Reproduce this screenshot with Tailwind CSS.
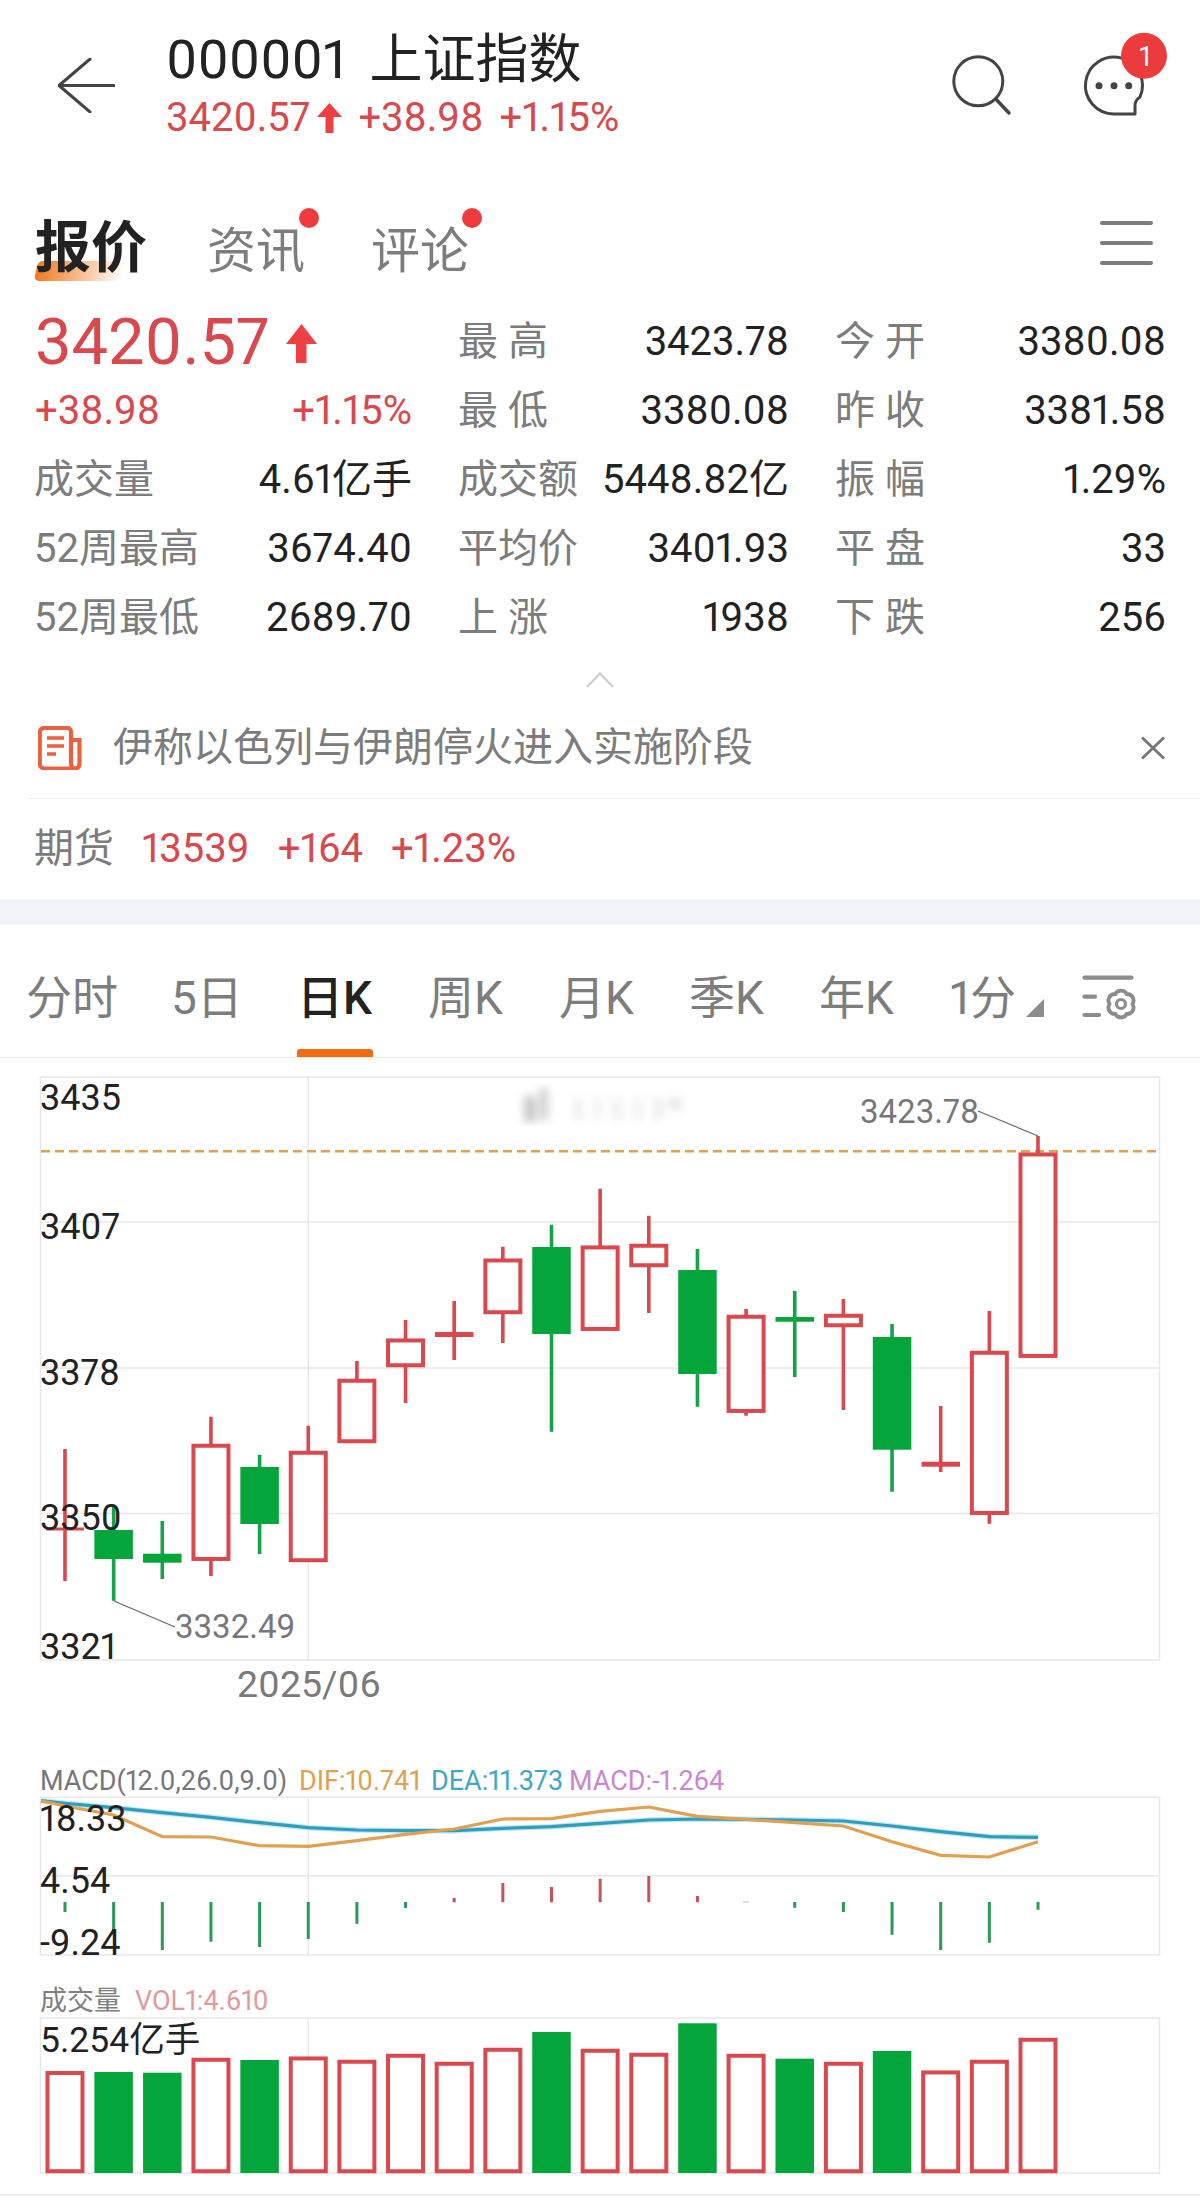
<!DOCTYPE html>
<html lang="zh">
<head>
<meta charset="utf-8">
<script src="https://cdn.jsdelivr.net/npm/@tailwindcss/browser@4"></script>
</head>
<body class="bg-white">
<div class="w-[1200px] h-[2211px] overflow-hidden bg-white text-[#222] proportional-nums font-['Roboto','Noto_Sans_CJK_SC',sans-serif]">

  <!-- header -->
  <header class="flex h-[170px] items-start pl-[58px]">
    <svg class="mt-[58px] w-[57px] h-[55px] shrink-0" viewBox="58 58 57 55" fill="none" stroke="#444" stroke-width="3" stroke-linecap="round" stroke-linejoin="round"><path d="M90 59 L59 85.5 L90 112 M60 85.5 H114"/></svg>
    <div class="ml-[51px] mt-[34px]">
      <div class="flex text-[54px] leading-[52px] text-[#222]"><span>000001</span><span class="ml-[23px] text-[53px]">上证指数</span></div>
      <div class="mt-[12px] flex items-center text-[40px] leading-[40px] text-[#d9484d]">
        <span>3420.57</span>
        <svg class="ml-[7px] w-[25px] h-[30px]" viewBox="0 0 25 30"><path fill="#ef3f42" d="M12.5 0 L25 14 H16.5 V30 H8.5 V14 H0 Z"/></svg>
        <span class="ml-[16px]">+38.98</span>
        <span class="ml-[16px]">+1.15%</span>
      </div>
    </div>
    <svg class="ml-auto mr-[30px] mt-[28px] w-[230px] h-[95px]" viewBox="940 28 230 95" fill="none">
      <circle cx="978.3" cy="81.3" r="24.5" stroke="#444" stroke-width="3"/>
      <path d="M996.7 100 L1009 113" stroke="#444" stroke-width="3.4" stroke-linecap="round"/>
      <path d="M1135 114 H1114 A28.5 28.5 0 1 1 1140 97 Q1135 100 1135 106 Z" stroke="#444" stroke-width="3" stroke-linejoin="round"/>
      <circle cx="1099" cy="85.7" r="3.5" fill="#444"/><circle cx="1114" cy="85.7" r="3.5" fill="#444"/><circle cx="1128.7" cy="85.7" r="3.5" fill="#444"/>
      <circle cx="1144" cy="55.7" r="23" fill="#ec3b3d"/>
      <text x="1145" y="65.5" text-anchor="middle" font-size="27" fill="#fff">1</text>
    </svg>
  </header>

  <!-- quote tabs -->
  <nav class="relative flex h-[137.5px] items-start pl-[35px]">
    <div class="absolute left-[36px] top-[91px] h-[20px] w-[88px] -skew-x-12 rounded-[5px] bg-linear-to-r from-[#f0791f] to-transparent"></div>
    <span class="relative mt-[48px] text-[56px] leading-[60px] font-bold text-[#222]">报价</span>
    <span class="relative ml-[60px] mt-[52px] text-[49px] leading-[60px] text-[#7d7d7d]">资讯<i class="absolute left-[92px] top-[-14px] h-[20px] w-[20px] rounded-full bg-[#ef3b3d]"></i></span>
    <span class="relative ml-[66px] mt-[52px] text-[49px] leading-[60px] text-[#7d7d7d]">评论<i class="absolute left-[91px] top-[-14px] h-[20px] w-[20px] rounded-full bg-[#ef3b3d]"></i></span>
    <div class="ml-auto mr-[47px] mt-[51px] flex w-[53px] flex-col gap-[16.5px]">
      <i class="block h-[3.5px] rounded-full bg-[#7d7d7d]"></i><i class="block h-[3.5px] rounded-full bg-[#7d7d7d]"></i><i class="block h-[3.5px] rounded-full bg-[#7d7d7d]"></i>
    </div>
  </nav>

  <!-- quote grid -->
  <section class="grid h-[345px] grid-cols-[378px_331px_331px] auto-rows-[69px] items-center gap-x-[46px] pl-[34px] text-[40px] leading-[50px]">
    <div class="flex items-center pl-[1px]"><span class="text-[65px] leading-[69px] text-[#d9484d]">3420.57</span><svg class="ml-[16px] mt-[2px] w-[31px] h-[39px]" viewBox="0 0 31 39"><path fill="#ef3f42" d="M15.5 0 L31 20 H20.5 V39 H10 V20 H0 Z"/></svg></div>
    <div class="flex justify-between"><span class="text-[#7c7c7c]">最 高</span><span>3423.78</span></div>
    <div class="flex justify-between"><span class="text-[#7c7c7c]">今 开</span><span>3380.08</span></div>

    <div class="flex justify-between pl-[1px] text-[#d9484d]"><span>+38.98</span><span>+1.15%</span></div>
    <div class="flex justify-between"><span class="text-[#7c7c7c]">最 低</span><span>3380.08</span></div>
    <div class="flex justify-between"><span class="text-[#7c7c7c]">昨 收</span><span>3381.58</span></div>

    <div class="flex justify-between"><span class="text-[#7c7c7c]">成交量</span><span>4.61亿手</span></div>
    <div class="flex justify-between"><span class="text-[#7c7c7c]">成交额</span><span>5448.82亿</span></div>
    <div class="flex justify-between"><span class="text-[#7c7c7c]">振 幅</span><span>1.29%</span></div>

    <div class="flex justify-between"><span class="text-[#7c7c7c]">52周最高</span><span>3674.40</span></div>
    <div class="flex justify-between"><span class="text-[#7c7c7c]">平均价</span><span>3401.93</span></div>
    <div class="flex justify-between"><span class="text-[#7c7c7c]">平 盘</span><span>33</span></div>

    <div class="flex justify-between"><span class="text-[#7c7c7c]">52周最低</span><span>2689.70</span></div>
    <div class="flex justify-between"><span class="text-[#7c7c7c]">上 涨</span><span>1938</span></div>
    <div class="flex justify-between"><span class="text-[#7c7c7c]">下 跌</span><span>256</span></div>
  </section>

  <!-- collapse caret -->
  <div class="flex h-[65.5px] justify-center pt-[19px]">
    <svg class="w-[28px] h-[16px]" viewBox="0 0 28 16" fill="none"><path d="M1 15 L14 1.5 L27 15" stroke="#cfcfcf" stroke-width="2.4"/></svg>
  </div>

  <!-- news -->
  <div class="ml-[27px] flex h-[81px] items-center border-b border-[#eeeeee] pl-[11px] pr-[34px] pb-[20px]">
    <svg class="w-[44px] h-[44px] shrink-0" viewBox="0 0 44 44" fill="none" stroke="#e8623f"><path d="M33 14 H41.5 V38 A4.5 4.5 0 0 1 37 42.5 H6 A4.5 4.5 0 0 1 1.8 38 V6 A4.5 4.5 0 0 1 6 1.8 H29 A4 4 0 0 1 33 6 V38 A4.5 4.5 0 0 0 37 42.5" stroke-width="4.2"/><path d="M9 12 H26 M9 20 H26 M9 28 H18" stroke-width="3.4"/></svg>
    <span class="ml-[31px] text-[40px] leading-[50px] text-[#7c7c7c]">伊称以色列与伊朗停火进入实施阶段</span>
    <svg class="ml-auto w-[26px] h-[24px]" viewBox="0 0 26 24" fill="none"><path d="M2 1.5 L24 22.5 M24 1.5 L2 22.5" stroke="#777" stroke-width="2.8"/></svg>
  </div>

  <!-- futures -->
  <div class="flex h-[99.5px] items-start pl-[34px] pt-[25px] text-[40px] leading-[50px] text-[#d9484d]">
    <span class="text-[#7c7c7c]">期货</span>
    <span class="ml-[28px]">13539</span>
    <span class="ml-[28px]">+164</span>
    <span class="ml-[28px]">+1.23%</span>
  </div>
  <div class="h-[26.5px] bg-[#f2f3f5]"></div>

  <!-- period tabs -->
  <nav class="relative flex h-[133px] items-start border-b border-[#e8e8e8] pl-[26px] pt-[43px] text-[46px] leading-[60px] text-[#7d7d7d]">
    <span class="w-[145px]">分时</span>
    <span class="w-[126px]">5日</span>
    <span class="w-[131px] font-medium text-[#222]">日K</span>
    <span class="w-[131px]">周K</span>
    <span class="w-[130px]">月K</span>
    <span class="w-[130px]">季K</span>
    <span class="w-[131px]">年K</span>
    <span class="w-[76px]">1分</span>
    <svg class="mt-[31px] w-[18px] h-[18px]" viewBox="0 0 18 18"><path fill="#8c8c8c" d="M0 18 L18 0 V18 Z"/></svg>
    <svg class="ml-[32px] mt-[6px] w-[65px] h-[55px]" viewBox="1075 974 65 55" fill="none" stroke="#8c8c8c" stroke-linecap="round">
      <path d="M1083.5 977.7 H1130.5 M1083.5 996.7 H1094 M1083.5 1015 H1098" stroke-width="4.2"/>
      <path d="M1125.75 994 A6.5 6.5 0 0 1 1131.5 1004 A6.5 6.5 0 0 1 1125.75 1014 A6.5 6.5 0 0 1 1114.25 1014 A6.5 6.5 0 0 1 1108.5 1004 A6.5 6.5 0 0 1 1114.25 994 A6.5 6.5 0 0 1 1125.75 994 Z" stroke-width="3.8"/>
      <circle cx="1120" cy="1004" r="4.5" stroke-width="3.2"/>
    </svg>
    <i class="absolute bottom-0 left-[297px] h-[8px] w-[76px] rounded-t-[3px] bg-[#f26b13]"></i>
  </nav>

  <!-- main k-line chart -->
  <svg class="block w-[1200px] h-[662px]" viewBox="0 1058 1200 662" fill="none">
    <defs><filter id="soft"><feGaussianBlur stdDeviation="4"/></filter></defs>
    <g stroke="#e8e8e8" stroke-width="1.5">
      <rect x="40.5" y="1077" width="1119" height="583"/>
      <path d="M41 1222 H1159 M41 1368 H1159 M41 1513.5 H1159 M308.25 1077 V1660"/>
    </g>
    <g filter="url(#soft)" fill="#9a9a9a">
      <rect x="524" y="1096" width="12" height="26" opacity=".55"/><rect x="540" y="1088" width="8" height="32" opacity=".5"/>
      <rect x="574" y="1098" width="8" height="22" opacity=".18"/><rect x="594" y="1098" width="8" height="22" opacity=".14"/><rect x="612" y="1098" width="10" height="22" opacity=".14"/><rect x="634" y="1098" width="8" height="22" opacity=".16"/><rect x="654" y="1098" width="8" height="22" opacity=".2"/><rect x="668" y="1098" width="14" height="12" opacity=".22"/>
    </g>
    <path d="M41 1151.3 H1159" stroke="#e5a04e" stroke-width="2.6" stroke-dasharray="9 5"/>

    <!-- wicks -->
    <g stroke="#d9484d" stroke-width="3.6">
      <path d="M65 1449 V1581 M210.95 1416.7 V1576 M308.25 1425.7 V1452 M356.9 1361 V1380 M405.55 1320 V1403 M454.2 1301 V1360 M502.85 1246.7 V1343 M600.15 1188.7 V1246 M648.8 1215.7 V1313 M746.1 1309 V1415.7 M843.4 1299 V1410 M940.7 1406 V1472 M989.35 1311 V1523.7 M1038 1136 V1153"/>
    </g>
    <g stroke="#15a24a" stroke-width="3.6">
      <path d="M113.65 1507 V1600.7 M162.3 1521 V1579 M259.6 1454.7 V1554 M551.5 1224.7 V1431.7 M697.45 1249 V1406.7 M794.75 1291 V1377 M892.05 1324 V1491.7"/>
    </g>
    <!-- hollow bodies -->
    <g stroke="#d9484d" stroke-width="4" fill="#fff">
      <rect x="193.45" y="1445.75" width="35" height="113.2"/>
      <rect x="290.75" y="1452.75" width="35" height="107.5"/>
      <rect x="339.4" y="1380.75" width="35" height="60.5"/>
      <rect x="388.05" y="1340.45" width="35" height="24.8"/>
      <rect x="485.35" y="1260.45" width="35" height="51.8"/>
      <rect x="582.65" y="1247.45" width="35" height="81.5"/>
      <rect x="631.3" y="1245.75" width="35" height="19.5"/>
      <rect x="728.6" y="1316.75" width="35" height="94.2"/>
      <rect x="825.9" y="1315.75" width="35" height="9.5"/>
      <rect x="971.85" y="1352.75" width="35" height="160.2"/>
      <rect x="1020.5" y="1154.45" width="35" height="201.5"/>
    </g>
    <!-- doji -->
    <g fill="#d9484d">
      <rect x="46" y="1527.5" width="38" height="3"/>
      <rect x="435" y="1332" width="38.5" height="5"/>
      <rect x="921.5" y="1461.7" width="38.5" height="5"/>
    </g>
    <!-- solid bodies -->
    <g fill="#04a63b">
      <rect x="94.4" y="1530" width="38.5" height="29"/>
      <rect x="143.05" y="1553.7" width="38.5" height="9"/>
      <rect x="240.35" y="1467" width="38.5" height="57"/>
      <rect x="532.25" y="1247" width="38.5" height="87"/>
      <rect x="678.2" y="1270" width="38.5" height="104"/>
      <rect x="775.5" y="1317" width="38.5" height="4.7"/>
      <rect x="872.8" y="1337" width="38.5" height="112.7"/>
    </g>
    <path d="M114 1601 L175 1627 M978 1111 L1038 1136" stroke="#666" stroke-width="1.2"/>
    <g font-size="36" fill="#222">
      <text x="40" y="1110">3435</text>
      <text x="40" y="1239">3407</text>
      <text x="40" y="1385">3378</text>
      <text x="40" y="1530">3350</text>
      <text x="40" y="1659">3321</text>
    </g>
    <g font-size="33" fill="#77777b">
      <text x="860" y="1123">3423.78</text>
      <text x="175" y="1638">3332.49</text>
    </g>
    <text x="237" y="1697" font-size="37.5" fill="#7a7a7a">2025/06</text>
  </svg>

  <!-- macd -->
  <svg class="block w-[1200px] h-[250px]" viewBox="0 1720 1200 250" fill="none">
    <g font-size="27">
      <text x="40" y="1790" fill="#77777b">MACD(12.0,26.0,9.0)</text>
      <text x="299" y="1790" fill="#e0a050">DIF:10.741</text>
      <text x="431" y="1790" fill="#3fa7c4">DEA:11.373</text>
      <text x="569" y="1790" fill="#c987d0">MACD:-1.264</text>
    </g>
    <g stroke="#e8e8e8" stroke-width="1.5">
      <rect x="40.5" y="1797.3" width="1119" height="157.7"/>
      <path d="M41 1875.7 H1159 M308.25 1797 V1955"/>
    </g>
    <g stroke="#2a9a57" stroke-width="3">
      <path d="M65 1902 V1912 M113.65 1902 V1933 M162.3 1902 V1950 M210.95 1902 V1941.7 M259.6 1902 V1947 M308.25 1902 V1939 M356.9 1902 V1923.7 M405.55 1902 V1908 M794.75 1902 V1907.7 M843.4 1902 V1912 M892.05 1902 V1934.7 M940.7 1902 V1950 M989.35 1902 V1942.7 M1038 1902 V1909.7"/>
    </g>
    <g stroke="#c8525a" stroke-width="3">
      <path d="M454.2 1898 V1902.3 M502.85 1883 V1902.3 M551.5 1887 V1902.3 M600.15 1878.7 V1902.3 M648.8 1876 V1902.3 M697.45 1896 V1902.3"/>
    </g>
    <path d="M743 1902 H749" stroke="#bbb" stroke-width="1"/>
    <polyline stroke="#bfeaf4" stroke-width="5.4" points="41,1800.7 65,1803.3 113.65,1807.7 162.3,1812.7 210.95,1817.3 259.6,1822.7 308.25,1827.7 356.9,1830 405.55,1830.7 454.2,1830.7 502.85,1828.3 551.5,1826.7 600.15,1823.3 648.8,1820 697.45,1819 746.1,1819.3 794.75,1820 843.4,1821 892.05,1826 940.7,1831.7 989.35,1836.7 1038,1837.3"/>
    <polyline stroke="#2f9dbd" stroke-width="3.2" points="41,1800.7 65,1803.3 113.65,1807.7 162.3,1812.7 210.95,1817.3 259.6,1822.7 308.25,1827.7 356.9,1830 405.55,1830.7 454.2,1830.7 502.85,1828.3 551.5,1826.7 600.15,1823.3 648.8,1820 697.45,1819 746.1,1819.3 794.75,1820 843.4,1821 892.05,1826 940.7,1831.7 989.35,1836.7 1038,1837.3"/>
    <polyline stroke="#e0a050" stroke-width="3.2" points="41,1800.7 65,1806 113.65,1815 162.3,1836.7 210.95,1837 259.6,1845.7 308.25,1846.3 356.9,1840.7 405.55,1834.3 454.2,1829 502.85,1819 551.5,1818.7 600.15,1811.3 648.8,1807 697.45,1816.3 746.1,1819.3 794.75,1822.7 843.4,1826 892.05,1841.7 940.7,1855.3 989.35,1857 1038,1841.7"/>
    <g font-size="36" fill="#222">
      <text x="40" y="1831">18.33</text>
      <text x="40" y="1893">4.54</text>
      <text x="40" y="1955">-9.24</text>
    </g>
  </svg>

  <!-- volume -->
  <svg class="block w-[1200px] h-[224px]" viewBox="0 1970 1200 224" fill="none">
    <text x="40" y="2010" font-size="27" fill="#808080">成交量</text>
    <text x="135" y="2010" font-size="27" fill="#e09a9e">VOL1:4.610</text>
    <g stroke="#e8e8e8" stroke-width="1.5">
      <rect x="40.5" y="2018" width="1119" height="155"/>
      <path d="M308.25 2018 V2173"/>
    </g>
    <g stroke="#d9484d" stroke-width="4" fill="#fff">
      <rect x="47.5" y="2073" width="35" height="98.2"/>
      <rect x="193.45" y="2059.75" width="35" height="111.5"/>
      <rect x="290.75" y="2058.45" width="35" height="112.8"/>
      <rect x="339.4" y="2061.75" width="35" height="109.5"/>
      <rect x="388.05" y="2055.75" width="35" height="115.5"/>
      <rect x="436.7" y="2063.75" width="35" height="107.5"/>
      <rect x="485.35" y="2049.75" width="35" height="121.5"/>
      <rect x="582.65" y="2050.75" width="35" height="120.5"/>
      <rect x="631.3" y="2054.75" width="35" height="116.5"/>
      <rect x="728.6" y="2055.75" width="35" height="115.5"/>
      <rect x="825.9" y="2063.75" width="35" height="107.5"/>
      <rect x="923.2" y="2072.45" width="35" height="98.8"/>
      <rect x="971.85" y="2061.75" width="35" height="109.5"/>
      <rect x="1020.5" y="2039.75" width="35" height="131.5"/>
    </g>
    <g fill="#04a63b">
      <rect x="94.4" y="2072" width="38.5" height="101"/>
      <rect x="143.05" y="2072.7" width="38.5" height="100.3"/>
      <rect x="240.35" y="2060" width="38.5" height="113"/>
      <rect x="532.25" y="2032" width="38.5" height="141"/>
      <rect x="678.2" y="2023.3" width="38.5" height="149.7"/>
      <rect x="775.5" y="2058.7" width="38.5" height="114.3"/>
      <rect x="872.8" y="2051" width="38.5" height="122"/>
    </g>
    <text x="40" y="2052" font-size="35.5" fill="#222">5.254亿手</text>
  </svg>
  <div class="h-[2px] bg-[#eeeeee]"></div>
</div>
</body>
</html>
